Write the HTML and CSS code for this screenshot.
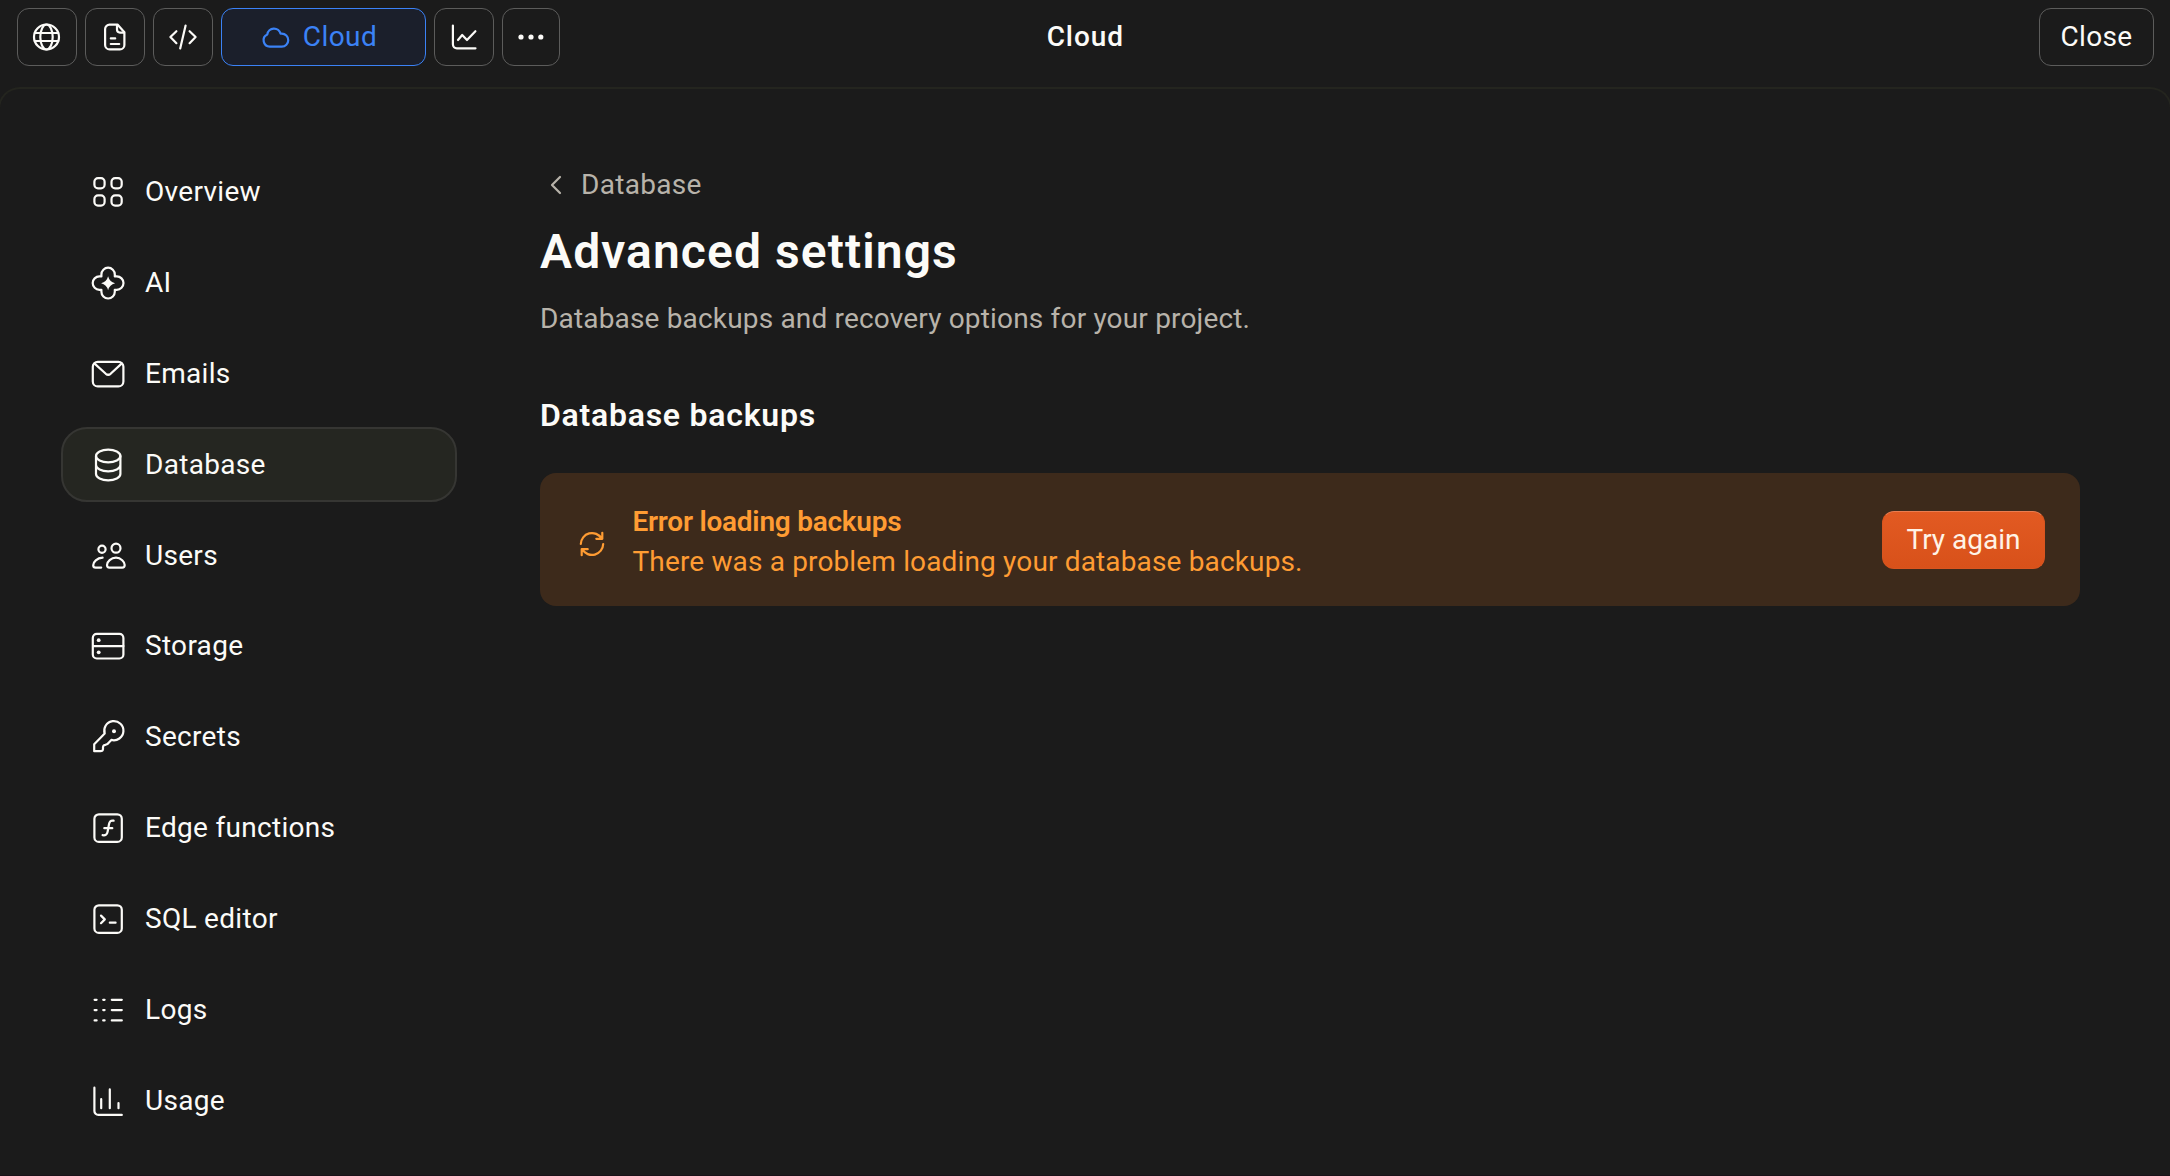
FILE: index.html
```html
<!DOCTYPE html>
<html lang="en">
<head>
    <meta charset="UTF-8">
    <meta name="viewport" content="width=device-width, initial-scale=1.0">
    <title>Cloud - Database</title>
    <link rel="stylesheet" href="styles.css">
</head>
<body>
    <header class="topbar">
        <div class="tools">
            <button class="tool" aria-label="Preview">
                <svg viewBox="0 0 30 30"><circle cx="14.5" cy="15" r="12.5"/><ellipse cx="14.5" cy="15" rx="6.2" ry="12.5"/><path d="M2.8 11h23.4M2.8 19h23.4"/></svg>
            </button>
            <button class="tool" aria-label="Files">
                <svg viewBox="0 0 30 30"><path d="M17.5 2.6H9.6a4.5 4.5 0 0 0-4.5 4.5v15.8a4.5 4.5 0 0 0 4.5 4.5h10.3a4.5 4.5 0 0 0 4.5-4.5V10.2z"/><path d="M17 3v4.6a3 3 0 0 0 3 3h4M10.8 16.4h4.4M10.8 22h8.4"/></svg>
            </button>
            <button class="tool" aria-label="Code">
                <svg viewBox="0 0 30 30"><path d="M8.4 9.2L2.4 15l6 6.2M21.6 9.2l6 5.8-6 6.2M17.6 3.6l-5.4 22.8"/></svg>
            </button>
            <button class="tool tool-active">
                <svg viewBox="0 0 30 30"><path d="M8.8 24.6a6.4 6.4 0 0 1-2.5-12.2 6.8 6.8 0 0 1 13.3-.7h1.2a6.45 6.45 0 0 1 0 12.9z"/></svg>
                <span>Cloud</span>
            </button>
            <button class="tool" aria-label="Analytics">
                <svg viewBox="0 0 30 30"><path d="M3.9 3.5v18.8a4 4 0 0 0 4 4h18.6M9 18l4.2-5 4.8 5 8.4-8.8"/></svg>
            </button>
            <button class="tool tool-more" aria-label="More">
                <svg class="filled" viewBox="0 0 30 30"><circle cx="5" cy="15" r="2.6"/><circle cx="15" cy="15" r="2.6"/><circle cx="24.8" cy="15" r="2.6"/></svg>
            </button>
        </div>
        <div class="topbar-title">Cloud</div>
        <button class="close">Close</button>
    </header>

    <div class="panel">
        <nav class="sidebar">
            <a class="item">
                <svg viewBox="0 0 36 36"><rect x="4.4" y="4.1" width="10.2" height="10.2" rx="3.6"/><rect x="21.5" y="4.1" width="10.2" height="10.2" rx="3.6"/><rect x="4.4" y="21.4" width="10.2" height="10.2" rx="3.6"/><rect x="21.5" y="21.4" width="10.2" height="10.2" rx="3.6"/></svg>
                <span>Overview</span>
            </a>
            <a class="item">
                <svg viewBox="0 0 36 36"><path d="M11.4 11.4V9.4a6.7 6.7 0 0 1 13.4 0v2h2a6.7 6.7 0 0 1 0 13.4h-2v2a6.7 6.7 0 0 1-13.4 0v-2h-2a6.7 6.7 0 0 1 0-13.4z"/><path class="solid" d="M18.1 11.2q1.4 5.6 7 7-5.6 1.4-7 7-1.4-5.6-7-7 5.6-1.4 7-7z"/></svg>
                <span>AI</span>
            </a>
            <a class="item">
                <svg viewBox="0 0 36 36"><rect x="2.8" y="5.8" width="30.6" height="24.6" rx="5"/><path d="M4.6 7.6l11.2 10.2q2.4 1.9 4.8 0L31.6 7.6"/></svg>
                <span>Emails</span>
            </a>
            <a class="item item-active">
                <svg viewBox="0 0 36 36"><ellipse cx="18.2" cy="9" rx="12.2" ry="6.3"/><path d="M6 9v18c0 3.5 5.5 6.3 12.2 6.3S30.4 30.5 30.4 27V9M6 18c0 3.5 5.5 6.3 12.2 6.3S30.4 21.5 30.4 18"/></svg>
                <span>Database</span>
            </a>
            <a class="item">
                <svg viewBox="0 0 36 36"><circle cx="12" cy="11.3" r="3.6"/><circle cx="26" cy="10.2" r="4.5"/><path d="M26 19.7c5 0 8.7 4.2 8.7 7.3 0 1.6-1 2.6-2.5 2.6H19.5c-1.5 0-2.5-1-2.5-2.6 0-3.1 4-7.3 9-7.3zM12.6 19.7C7 19.9 3.2 24 3.2 27.2c0 1.5 1 2.4 2.5 2.4h5.5"/></svg>
                <span>Users</span>
            </a>
            <a class="item">
                <svg viewBox="0 0 36 36"><rect x="2.8" y="5.9" width="30.6" height="24.6" rx="4"/><path d="M3 18.1h30.4"/><circle class="solid" cx="8.7" cy="12.2" r="1.9"/><circle class="solid" cx="8.7" cy="24.3" r="1.9"/></svg>
                <span>Storage</span>
            </a>
            <a class="item">
                <svg viewBox="0 0 36 36"><path d="M14.7 14.6L4.2 25.2v7h6.3q2.3 0 2.5-2.2v-2q.2-2 2.5-2.2l2-.8 3.8-4.1a9.6 9.6 0 1 0-6.6-6.3z"/><circle class="solid" cx="24" cy="12.2" r="2"/></svg>
                <span>Secrets</span>
            </a>
            <a class="item">
                <svg viewBox="0 0 36 36"><rect x="4.4" y="4.3" width="27.4" height="27.6" rx="4.5"/><path d="M23.6 10.7c-3-.6-4.1.9-4.6 3.5l-1.4 7.5c-.5 2.6-2 4.1-5 3.5M14.3 18.2h8"/></svg>
                <span>Edge functions</span>
            </a>
            <a class="item">
                <svg viewBox="0 0 36 36"><rect x="4.4" y="4.3" width="27.4" height="27.6" rx="4.5"/><path d="M11 14.6l3.8 3.8-3.8 3.8M19.8 21.7h5.8"/></svg>
                <span>SQL editor</span>
            </a>
            <a class="item">
                <svg viewBox="0 0 36 36"><path d="M4.6 7.8h2M13.2 7.8h1.4M21.8 7.8h10M4.6 18.1h2M13.2 18.1h1.4M21.8 18.1h10M4.6 28.4h2M13.2 28.4h1.4M21.8 28.4h10"/></svg>
                <span>Logs</span>
            </a>
            <a class="item">
                <svg viewBox="0 0 36 36"><path d="M4.4 4.7v23.2a4 4 0 0 0 4 4h23.4M11.2 16.2v9M19.8 6.4v18.8M28.5 20v5.2"/></svg>
                <span>Usage</span>
            </a>
        </nav>

        <main class="content">
            <a class="back">
                <svg viewBox="0 0 24 24"><path d="M16 4l-8 8 8 8"/></svg>
                <span>Database</span>
            </a>
            <h1>Advanced settings</h1>
            <p class="description">Database backups and recovery options for your project.</p>
            <h2>Database backups</h2>
            <div class="alert">
                <svg viewBox="0 0 28 28"><path d="M2.8 14A11.2 11.2 0 0 1 23.6 8.5M24.3 2.8v6h-6M25.2 14A11.2 11.2 0 0 1 4.4 19.5M3.7 25.2v-6h6"/></svg>
                <div class="alert-text">
                    <div class="alert-title">Error loading backups</div>
                    <div>There was a problem loading your database backups.</div>
                </div>
                <button class="retry">Try again</button>
            </div>
        </main>
    </div>
</body>
</html>
```
FILE: styles.css
```css
* {
    box-sizing: border-box;
}

body {
    margin: 0;
    height: 1176px;
    overflow: hidden;
    display: flex;
    flex-direction: column;
    font-family: Roboto, sans-serif;
    font-size: 28px;
    line-height: 36px;
    background-color: #1b1b1b;
    color: #fcfbf8;
    border-bottom: 1px solid #1a1118;
}

button {
    font: inherit;
    color: inherit;
    background: none;
    padding: 0;
    cursor: pointer;
}

svg {
    fill: none;
    stroke: currentColor;
    stroke-width: 2.2;
    stroke-linecap: round;
    stroke-linejoin: round;
    flex-shrink: 0;
}

.filled,
.solid {
    fill: currentColor;
    stroke: none;
}

.topbar {
    display: grid;
    grid-template-columns: 1fr auto 1fr;
    align-items: center;
    height: 87px;
    padding: 8px 16px 21px 16.5px;
}

.tools {
    display: flex;
    gap: 8px;
}

.tool {
    display: flex;
    align-items: center;
    justify-content: center;
    gap: 12px;
    width: 60px;
    height: 58px;
    border: 1px solid #5c5c5b;
    border-radius: 12px;
}

.tool svg {
    width: 30px;
    height: 30px;
}

.tool-active {
    width: 205px;
    padding-right: 8px;
    border-color: #3b82f6;
    background-color: #1b1f2b;
    color: #3b82f6;
    letter-spacing: 0.45px;
}

.tool-more {
    width: 58px;
}

.topbar-title {
    font-weight: 500;
    letter-spacing: 0.9px;
}

.close {
    justify-self: end;
    width: 115px;
    height: 58px;
    border: 1px solid #5c5c5b;
    border-radius: 12px;
    letter-spacing: 0.35px;
}

.panel {
    flex: 1;
    display: flex;
    align-items: flex-start;
    gap: 83px;
    margin: 0 -2px;
    padding: 66px 90px 0 61px;
    border: 2px solid #24251f;
    border-bottom: none;
    border-radius: 22px 22px 0 0;
}

.sidebar {
    display: flex;
    flex-direction: column;
    gap: 16.33px;
    width: 396px;
}

.item {
    display: flex;
    align-items: center;
    gap: 19px;
    height: 74.5px;
    padding-left: 27px;
    border: 2px solid transparent;
    border-radius: 26px;
    letter-spacing: 0.3px;
}

.item svg {
    width: 36px;
    height: 36px;
}

.item-active {
    background-color: #252621;
    border-color: #363633;
}

.content {
    flex: 1;
    padding-top: 11.5px;
}

.back {
    display: flex;
    align-items: center;
    gap: 13px;
    padding-left: 4px;
    color: #b8b3aa;
    letter-spacing: 0.3px;
}

.back svg {
    width: 24px;
    height: 24px;
}

h1 {
    margin: 19px 0 0;
    font-size: 48px;
    font-weight: 600;
    line-height: 60px;
    letter-spacing: 1.1px;
}

.description {
    margin: 19px 0 0;
    color: #b8b3aa;
    letter-spacing: 0.17px;
}

h2 {
    margin: 56px 0 0;
    font-size: 32px;
    font-weight: 600;
    line-height: 44px;
    letter-spacing: 0.75px;
}

.alert {
    display: flex;
    align-items: center;
    height: 133px;
    margin-top: 36px;
    padding: 0 35px 0 38px;
    border-radius: 16px;
    background-color: #3d2a1b;
    color: #ff9c33;
}

.alert svg {
    width: 28px;
    height: 28px;
    margin-top: 9px;
}

.alert-text {
    flex: 1;
    margin: 6px 0 0 26.5px;
    line-height: 40.5px;
    letter-spacing: 0.15px;
}

.alert-title {
    font-weight: 600;
    letter-spacing: -0.25px;
}

.retry {
    width: 163px;
    height: 58px;
    margin-top: 2px;
    border: 1px solid #d9551f;
    border-top-color: #ea7d50;
    border-radius: 12px;
    background: linear-gradient(#e25a22, #d8511a);
    color: #fff3e6;
}
```
